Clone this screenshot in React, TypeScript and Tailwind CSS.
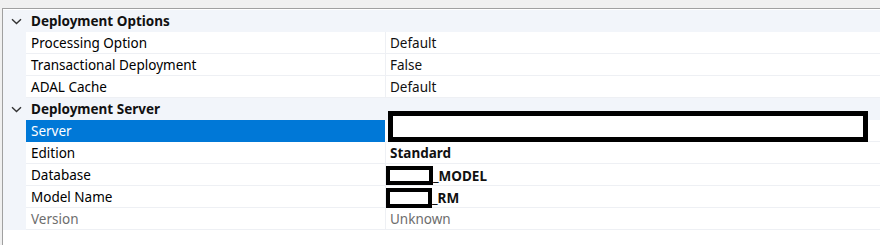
import React from 'react';

type Row = { name: string; value?: React.ReactNode; selected?: boolean; muted?: boolean; bold?: boolean };

const Redact = ({ w, h, t }: { w: number; h: number; t: number }) => (
  <span
    className="inline-block bg-white border-black align-middle"
    style={{ width: w, height: h, borderWidth: t }}
  />
);

const options: Row[] = [
  { name: 'Processing Option', value: 'Default' },
  { name: 'Transactional Deployment', value: 'False' },
  { name: 'ADAL Cache', value: 'Default' },
];

const server: Row[] = [
  {
    name: 'Server',
    selected: true,
    value: <span className="block w-[480px] h-[31px] border-[5px] border-black bg-white ml-[-2px] mt-[-10px]" />,
  },
  { name: 'Edition', value: 'Standard', bold: true },
  {
    name: 'Database',
    bold: true,
    value: (
      <span className="flex items-end ml-[-4px]">
        <Redact w={47} h={19} t={4} />
        <span className="mb-[2px]">_MODEL</span>
      </span>
    ),
  },
  {
    name: 'Model Name',
    bold: true,
    value: (
      <span className="flex items-end ml-[-4px]">
        <Redact w={46} h={20} t={4} />
        <span className="mb-[2px]">_RM</span>
      </span>
    ),
  },
  { name: 'Version', value: 'Unknown', muted: true },
];

function Chevron() {
  return (
    <svg width="11" height="7" viewBox="0 0 11 7" className="text-[#333]">
      <path d="M1 1.2 L5.5 5.5 L10 1.2" fill="none" stroke="currentColor" strokeWidth="1.4" />
    </svg>
  );
}

function Category({ title }: { title: string }) {
  return (
    <div className="flex h-[22px] items-center bg-[#f2f5fa]">
      <div className="w-[23px] flex justify-center pl-[3px] pt-[1px]">
        <Chevron />
      </div>
      <div className="pl-[5px] pt-[2px] font-bold text-[#111]">{title}</div>
    </div>
  );
}

function PropRow({ row }: { row: Row }) {
  return (
    <div className="flex h-[22px]">
      <div className="w-[23px] bg-[#f2f5fa]" />
      <div
        className={`w-[359px] flex items-center pl-[5px] pt-[2px] border-b ${
          row.selected ? 'bg-[#0078d7] text-white border-[#0078d7]' : 'border-[#eef0f4]'
        } ${row.muted ? 'text-[#6d6d6d]' : ''}`}
      >
        {row.name}
      </div>
      <div className={`w-[1px] ${row.selected ? 'bg-white' : 'bg-[#eef0f4]'}`} />
      <div
        className={`flex-1 flex items-center pl-[4px] pt-[2px] border-b border-[#eef0f4] ${
          row.muted ? 'text-[#6d6d6d]' : 'text-[#111]'
        } ${row.bold ? 'font-bold' : ''}`}
      >
        {row.value}
      </div>
    </div>
  );
}

export default function App() {
  return (
    <div
      className="w-[880px] h-[245px] bg-[#f0f0f0] pt-[8px] pl-[2px] overflow-hidden text-[13.5px] leading-none"
      style={{ fontFamily: '"Noto Sans", "Open Sans", sans-serif' }}
    >
      <div className="h-full border-t border-l border-[#a0a0a0] bg-white flex flex-col">
        <div className="h-[1px]" />
        <Category title="Deployment Options" />
        {options.map((r) => (
          <PropRow key={r.name} row={r} />
        ))}
        <Category title="Deployment Server" />
        {server.map((r) => (
          <PropRow key={r.name} row={r} />
        ))}
      </div>
    </div>
  );
}
